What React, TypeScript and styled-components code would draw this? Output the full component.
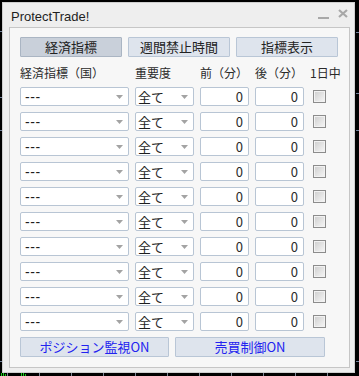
import React from "react";
import styled, { createGlobalStyle } from "styled-components";

const GlobalStyle = createGlobalStyle`
  html, body {
    margin: 0;
    padding: 0;
    background: #000;
  }
  * {
    box-sizing: border-box;
  }
`;

const rows = Array.from({ length: 10 }, (_, i) => i);

function ChartBackdrop() {
  const ticks = [7, 39, 71, 103, 135, 167, 199, 231, 263, 295, 327];
  const greens = [
    [1, 373],
    [3, 372],
    [5, 374],
    [21, 373],
    [23, 372],
    [25, 374],
  ];
  return (
    <Backdrop width="359" height="376" viewBox="0 0 359 376">
      {ticks.map((x) => (
        <line key={x} x1={x + 0.5} y1="373" x2={x + 0.5} y2="376" stroke="#7d8796" />
      ))}
      {greens.map(([x, y]) => (
        <line key={x} x1={x + 0.5} y1={y} x2={x + 0.5} y2="376" stroke="#19d019" />
      ))}
      {[31, 97, 130, 361].map((y) => (
        <line key={"l" + y} x1="0" y1={y + 0.5} x2="2" y2={y + 0.5} stroke="#6f7f99" />
      ))}
      {[32, 93, 130, 361].map((y) => (
        <line key={"r" + y} x1="356" y1={y + 0.5} x2="359" y2={y + 0.5} stroke="#6f7f99" />
      ))}
    </Backdrop>
  );
}

function App() {
  return (
    <Stage>
      <GlobalStyle />
      <ChartBackdrop />
      <Window>
        <TitleBar>
          <Title>ProtectTrade!</Title>
          <TitleIcons>
            <svg width="11" height="3" viewBox="0 0 11 3">
              <rect x="0" y="0" width="11" height="2" fill="#a8a8a8" />
            </svg>
            <svg width="10" height="9" viewBox="0 0 10 9">
              <path d="M1 1 L9 8 M9 1 L1 8" stroke="#a8a8a8" strokeWidth="2.2" />
            </svg>
          </TitleIcons>
        </TitleBar>
        <Panel>
          <Tabs>
            <Tab $active>経済指標</Tab>
            <Tab>週間禁止時間</Tab>
            <Tab>指標表示</Tab>
          </Tabs>
          <HeaderRow>
            <span>経済指標（国）</span>
            <span>重要度</span>
            <span>前（分）</span>
            <span>後（分）</span>
            <span>1日中</span>
          </HeaderRow>
          <RowList>
            {rows.map((i) => (
              <Row key={i}>
                <Dropdown>
                  <Dashes>---</Dashes>
                  <Arrow />
                </Dropdown>
                <Dropdown $cjk>
                  <span>全て</span>
                  <Arrow />
                </Dropdown>
                <NumberBox>0</NumberBox>
                <NumberBox>0</NumberBox>
                <Check />
              </Row>
            ))}
          </RowList>
          <Actions>
            <ActionButton>ポジション監視ON</ActionButton>
            <ActionButton>売買制御ON</ActionButton>
          </Actions>
        </Panel>
      </Window>
    </Stage>
  );
}

function Arrow() {
  return (
    <svg width="7" height="4" viewBox="0 0 7 4">
      <path d="M0 0 H7 L3.5 4 Z" fill="#a3a3a3" />
    </svg>
  );
}

export default App;

const Stage = styled.div`
  position: relative;
  width: 359px;
  height: 376px;
  overflow: hidden;
  background: #000;
  padding: 2px 0 0 2px;
`;

const Backdrop = styled.svg`
  position: absolute;
  top: 0;
  left: 0;
`;

const Window = styled.div`
  position: relative;
  width: 353px;
  height: 371px;
  background: #eeeeee;
  border: 1px solid #cfcfcf;
  display: flex;
  flex-direction: column;
`;

const TitleBar = styled.div`
  height: 24px;
  display: flex;
  align-items: center;
  justify-content: space-between;
  padding: 0 6px 0 8px;
`;

const Title = styled.span`
  font-family: "Liberation Sans", Arial, sans-serif;
  font-size: 13px;
  color: #1e1e1e;
  margin-top: 2px;
`;

const TitleIcons = styled.div`
  display: flex;
  align-items: center;
  gap: 9px;
  svg:first-child {
    margin-top: 6px;
  }
  svg:last-child {
    margin-top: -4px;
  }
`;

const Panel = styled.div`
  margin: 0 4px 4px 6px;
  flex: 1;
  background: #f7f7f7;
  border: 1px solid #c6c6c6;
  padding: 9px 10px 10px 10px;
  display: flex;
  flex-direction: column;
  font-family: "Noto Sans CJK JP", "Noto Sans", sans-serif;
`;

const Tabs = styled.div`
  display: grid;
  grid-template-columns: repeat(3, 102px);
  column-gap: 6px;
`;

const Tab = styled.button<{ $active?: boolean }>`
  height: 20px;
  padding: 0;
  border: 1px solid ${(p) => (p.$active ? "#aab5c3" : "#b9c6d6")};
  border-radius: 1px;
  background: ${(p) => (p.$active ? "#c9d0da" : "#dee4ed")};
  font-family: inherit;
  font-size: 13px;
  line-height: 18px;
  color: #222;
`;

const HeaderRow = styled.div`
  height: 30px;
  display: grid;
  grid-template-columns: 109px 59px 49px 49px 1fr;
  column-gap: 6px;
  align-items: center;
  font-size: 12px;
  color: #2a2a2a;
  white-space: nowrap;
  span {
    margin-top: 1px;
  }
`;

const RowList = styled.div`
  display: flex;
  flex-direction: column;
  gap: 6px;
`;

const Row = styled.div`
  height: 19px;
  display: grid;
  grid-template-columns: 109px 59px 49px 49px 1fr;
  column-gap: 6px;
  align-items: center;
`;

const Dropdown = styled.div<{ $cjk?: boolean }>`
  height: 19px;
  display: flex;
  align-items: center;
  justify-content: space-between;
  padding: 0 5px 0 ${(p) => (p.$cjk ? "2px" : "4px")};
  background: #fff;
  border: 1px solid #b8c5d4;
  border-radius: 2px;
  font-size: 13px;
  color: #1e1e1e;
  svg {
    margin-top: 1px;
  }
`;

const Dashes = styled.span`
  font-family: "Liberation Sans", Arial, sans-serif;
  font-size: 14px;
  letter-spacing: 0.6px;
`;

const NumberBox = styled.div`
  height: 19px;
  background: #fff;
  border: 1px solid #b8c5d4;
  border-radius: 2px;
  padding-right: 5px;
  text-align: right;
  font-size: 13px;
  line-height: 17px;
  color: #2b2b2b;
`;

const Check = styled.span`
  display: block;
  width: 13px;
  height: 13px;
  margin-left: 3px;
  border: 1px solid #8c8c8c;
  box-shadow: inset 0 0 0 1px #f2f2f2;
  background: linear-gradient(135deg, #cdcdcd, #f7f7f7);
`;

const Actions = styled.div`
  margin-top: 6px;
  display: grid;
  grid-template-columns: 149px 150px;
  column-gap: 6px;
`;

const ActionButton = styled.button`
  height: 20px;
  padding: 0;
  border: 1px solid #b9c6d6;
  border-radius: 1px;
  background: #dee4ed;
  font-family: inherit;
  font-size: 13px;
  line-height: 18px;
  color: #2222f0;
`;
